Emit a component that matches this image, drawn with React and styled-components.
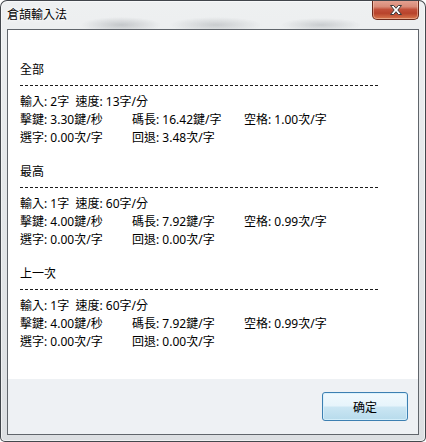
import React from "react";
import styled, { createGlobalStyle } from "styled-components";

const sections = [
  {
    title: "全部",
    summary: "輸入: 2字  速度: 13字/分",
    stats: [
      ["擊鍵", "3.30鍵/秒"],
      ["碼長", "16.42鍵/字"],
      ["空格", "1.00次/字"],
      ["選字", "0.00次/字"],
      ["回退", "3.48次/字"],
    ],
  },
  {
    title: "最高",
    summary: "輸入: 1字  速度: 60字/分",
    stats: [
      ["擊鍵", "4.00鍵/秒"],
      ["碼長", "7.92鍵/字"],
      ["空格", "0.99次/字"],
      ["選字", "0.00次/字"],
      ["回退", "0.00次/字"],
    ],
  },
  {
    title: "上一次",
    summary: "輸入: 1字  速度: 60字/分",
    stats: [
      ["擊鍵", "4.00鍵/秒"],
      ["碼長", "7.92鍵/字"],
      ["空格", "0.99次/字"],
      ["選字", "0.00次/字"],
      ["回退", "0.00次/字"],
    ],
  },
];

const App = () => {
  return (
    <>
      <GlobalStyle />
      <Window>
        <TitleBar>
          <Title>倉頡輸入法</Title>
          <CloseButton aria-label="close">
            <svg width="16" height="12" viewBox="0 0 16 12">
              <path
                d="M2.5 1.5h3.2L8 4.3l2.3-2.8h3.2L9.8 6l3.7 4.5h-3.2L8 7.7l-2.3 2.8H2.5L6.2 6z"
                fill="#fff"
                stroke="#3b3b3b"
                strokeWidth="1"
                strokeLinejoin="round"
              />
            </svg>
          </CloseButton>
        </TitleBar>
        <Client>
          <Content>
            {sections.map((s) => (
              <Section key={s.title}>
                <SectionTitle>{s.title}</SectionTitle>
                <DashLine />
                <Rows>
                  <Summary>{s.summary}</Summary>
                  {s.stats.map(([label, value]) => (
                    <Cell key={label}>
                      {label}: {value}
                    </Cell>
                  ))}
                </Rows>
              </Section>
            ))}
          </Content>
          <Footer>
            <OkButton>确定</OkButton>
          </Footer>
        </Client>
      </Window>
    </>
  );
};

const GlobalStyle = createGlobalStyle`
  html, body {
    margin: 0;
    padding: 0;
    background: #ffffff;
  }

  body {
    width: 426px;
    height: 442px;
    overflow: hidden;
    font-family: "Noto Sans", "Noto Sans CJK TC", sans-serif;
    font-size: 12px;
    color: #000;
  }
`;

const Window = styled.div`
  width: 426px;
  height: 442px;
  box-sizing: border-box;
  border: 1px solid rgba(38, 42, 48, 0.85);
  border-radius: 7px 7px 5px 5px;
  overflow: hidden;
  display: flex;
  flex-direction: column;
  background:
    radial-gradient(ellipse 40px 8px at 120px 24px, rgba(120, 126, 132, 0.35), transparent),
    radial-gradient(ellipse 46px 8px at 215px 24px, rgba(120, 126, 132, 0.3), transparent),
    radial-gradient(ellipse 40px 7px at 320px 24px, rgba(120, 126, 132, 0.3), transparent),
    linear-gradient(180deg, #eef0f1 0%, #e4e7e9 40%, #dcdfe2 100%);
  box-shadow: inset 0 0 0 1px rgba(255, 255, 255, 0.55);
`;

const TitleBar = styled.div`
  height: 28px;
  flex: none;
  display: flex;
  align-items: flex-start;
  padding-left: 6px;
`;

const Title = styled.div`
  margin-top: 5px;
  line-height: 18px;
  font-size: 12px;
  color: #000;
  text-shadow: 0 0 6px rgba(255, 255, 255, 0.95), 0 0 3px rgba(255, 255, 255, 0.9);
`;

const CloseButton = styled.div`
  margin-left: auto;
  margin-right: 6px;
  margin-top: -1px;
  width: 47px;
  height: 20px;
  box-sizing: border-box;
  border: 1px solid #6b2a1c;
  border-top: none;
  border-radius: 0 0 5px 5px;
  display: flex;
  align-items: center;
  justify-content: center;
  background: linear-gradient(
    180deg,
    #e6a596 0%,
    #d98b78 35%,
    #c2503a 50%,
    #b8432c 70%,
    #d9784e 100%
  );
  box-shadow: inset 0 0 0 1px rgba(255, 220, 200, 0.45);
`;

const Client = styled.div`
  flex: 1;
  margin: 0 6px 6px 6px;
  border: 1px solid #60656b;
  display: flex;
  flex-direction: column;
  min-height: 0;
`;

const Content = styled.div`
  flex: 1;
  background: #ffffff;
  padding: 31px 0 0 12px;
  display: flex;
  flex-direction: column;
  gap: 16px;
`;

const Section = styled.section`
  display: flex;
  flex-direction: column;
`;

const SectionTitle = styled.div`
  line-height: 18px;
`;

const DashLine = styled.div`
  width: 360px;
  height: 1px;
  margin-top: 6px;
  background: repeating-linear-gradient(
    to right,
    #1c1c1c 0 3px,
    transparent 3px 5px
  );
`;

const Rows = styled.div`
  margin-top: 7px;
  display: grid;
  grid-template-columns: 112px 112px 112px;
  line-height: 18px;
`;

const Summary = styled.div`
  grid-column: 1 / -1;
  white-space: pre;
`;

const Cell = styled.div`
  white-space: nowrap;
`;

const Footer = styled.div`
  height: 55px;
  flex: none;
  box-sizing: border-box;
  background: #eef1f4;
  display: flex;
  justify-content: flex-end;
  align-items: flex-start;
  padding: 13px 10px 0 0;
`;

const OkButton = styled.button`
  width: 86px;
  height: 29px;
  box-sizing: border-box;
  border: 1px solid #3c7fb1;
  border-radius: 3px;
  padding: 0;
  font-family: "Noto Sans", "Noto Sans CJK TC", sans-serif;
  font-size: 12px;
  color: #000;
  background: linear-gradient(
    180deg,
    #f1f9fd 0%,
    #e6f4fb 48%,
    #cbe6f3 52%,
    #b7dbec 100%
  );
  box-shadow: inset 0 0 0 1px rgba(215, 240, 252, 0.9);
`;

export default App;
